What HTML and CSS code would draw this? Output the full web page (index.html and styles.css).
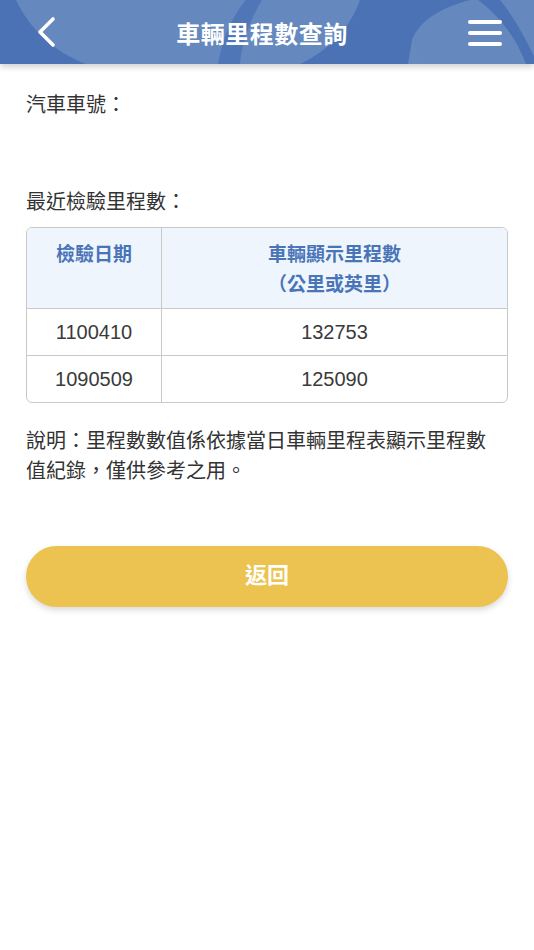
FILE: index.html
```html
<!DOCTYPE html>
<html lang="zh-Hant">
<head>
    <meta charset="UTF-8">
    <meta name="viewport" content="width=device-width, initial-scale=1.0">
    <title>車輛里程數查詢</title>
    <link rel="stylesheet" href="styles.css">
</head>
<body>
    <!-- 標題列 -->
    <header class="topbar">
        <svg class="topbar-bg" viewBox="0 0 534 64" preserveAspectRatio="none">
            <path d="M0 0 H16 C30 30 55 52 86 64 H0 Z" fill="#4a72b5"/>
            <path d="M218 64 C222 40 232 16 246 0 H262 C250 20 242 42 240 64 Z" fill="#4f76b7"/>
            <path d="M290 0 H470 C440 8 420 20 412 40 L408 64 H300 C330 50 350 28 360 0 Z" fill="#4a72b5"/>
            <path d="M412 40 C420 50 428 58 436 64 H412 Z" fill="#6689bf"/>
            <path d="M478 0 H500 C515 18 526 40 534 56 V64 H526 C516 38 500 16 478 0 Z" fill="#4a72b5"/>
        </svg>
        <button class="icon-btn back" aria-label="返回">
            <svg width="24" height="36" viewBox="0 0 24 36"><path d="M19 5 L6 18 L19 31" fill="none" stroke="#fff" stroke-width="3.6" stroke-linecap="round" stroke-linejoin="round"/></svg>
        </button>
        <h1 class="topbar-title">車輛里程數查詢</h1>
        <button class="icon-btn menu" aria-label="選單">
            <span></span><span></span><span></span>
        </button>
    </header>

    <main class="content">
        <div class="field">
            <div class="label">汽車車號：</div>
            <div class="value"></div>
        </div>

        <div class="label">最近檢驗里程數：</div>
        <table class="mileage">
            <thead>
                <tr>
                    <th class="col-date">檢驗日期</th>
                    <th>車輛顯示里程數<br>（公里或英里）</th>
                </tr>
            </thead>
            <tbody>
                <tr><td>1100410</td><td>132753</td></tr>
                <tr><td>1090509</td><td>125090</td></tr>
            </tbody>
        </table>

        <p class="note">說明：里程數數值係依據當日車輛里程表顯示里程數值紀錄，僅供參考之用。</p>

        <button class="btn-back">返回</button>
    </main>
</body>
</html>
```

FILE: styles.css
```css
/* 基本設定 */
body { margin: 0; background: #fff; color: #333; font-family: "Noto Sans CJK TC", "Noto Sans", sans-serif; }

/* 標題列 */
.topbar { position: relative; height: 64px; background: #6589be; display: flex; align-items: center; justify-content: space-between; padding: 0 32px 0 34px; box-shadow: 0 3px 6px rgba(0,0,0,0.18); overflow: hidden; }
.topbar-bg { position: absolute; left: 0; top: 0; width: 100%; height: 100%; }
.topbar-title { position: relative; margin: 0 0 0 -2px; color: #fff; font-size: 24px; font-weight: 700; letter-spacing: 0.5px; }
.icon-btn { position: relative; background: none; border: 0; padding: 0; cursor: pointer; }
.back { width: 24px; height: 36px; margin-top: 0; }
.back svg { display: block; }
.menu { width: 34px; height: 26px; display: flex; flex-direction: column; justify-content: space-between; margin-top: 2px; }
.menu span { display: block; height: 4px; background: #fff; border-radius: 2px; }

/* 內容 */
.content { padding: 25px 26px 40px; }
.label { font-size: 20px; line-height: 30px; }
.field { margin-bottom: 67px; }

.mileage { width: 100%; margin-top: 11px; border-collapse: separate; border-spacing: 0; border: 1.5px solid #c9c9c9; border-radius: 6px; overflow: hidden; }
.mileage th, .mileage td { text-align: center; border-bottom: 1.5px solid #c9c9c9; }
.mileage th + th, .mileage td + td { border-left: 1.5px solid #c9c9c9; }
.mileage tbody tr:last-child td { border-bottom: 0; }
.mileage th { background: #eff5fd; color: #4a74b8; font-size: 19px; font-weight: 700; line-height: 30px; padding: 10px 0 10px; }
.mileage .col-date { width: 134px; vertical-align: top; }
.mileage td { font-family: "Liberation Sans", "Noto Sans CJK TC", sans-serif; font-size: 20px; color: #3a3a3a; height: 46px; padding: 0; }

.note { margin: 22px 0 0; padding-right: 14px; font-size: 20px; line-height: 30px; }

.btn-back { display: block; width: 100%; height: 61px; margin-top: 61px; padding: 0 0 8px; border: 0; border-radius: 31px; background: #ecc350; color: #fff; font-family: inherit; font-size: 22px; line-height: 1; font-weight: 700; box-shadow: 0 3px 6px rgba(0,0,0,0.15); }
```
